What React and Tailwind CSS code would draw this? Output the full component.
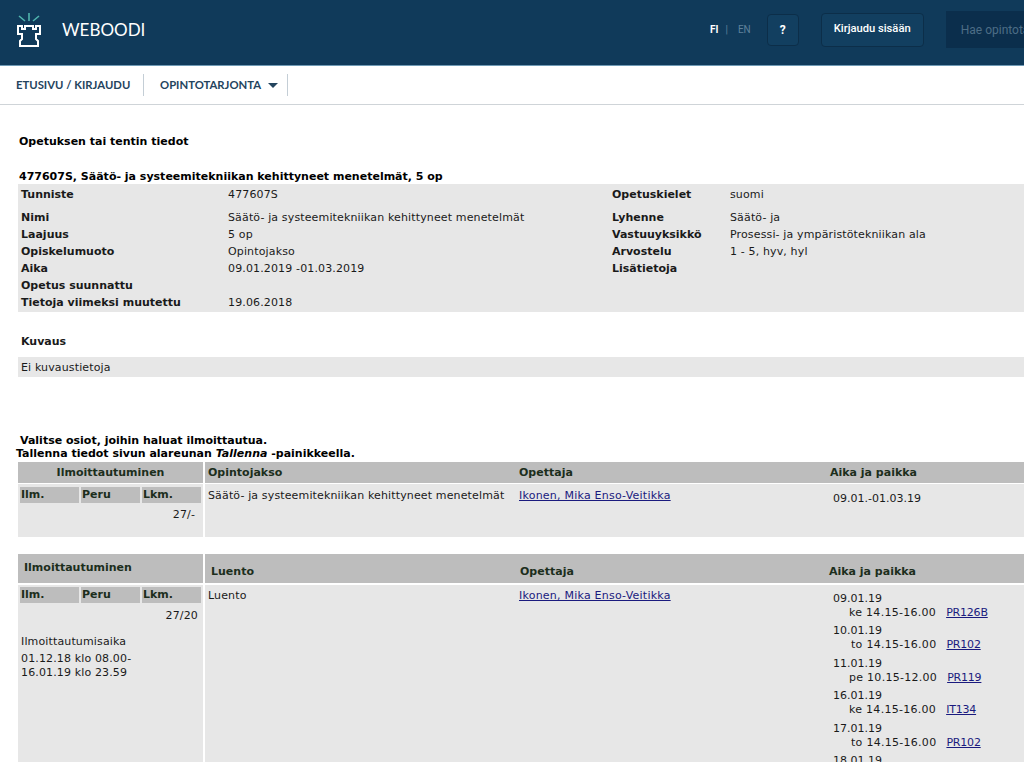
const info = [
  ["Nimi", "Säätö- ja systeemitekniikan kehittyneet menetelmät", "Lyhenne", "Säätö- ja"],
  ["Laajuus", "5 op", "Vastuuyksikkö", "Prosessi- ja ympäristötekniikan ala"],
  ["Opiskelumuoto", "Opintojakso", "Arvostelu", "1 - 5, hyv, hyl"],
  ["Aika", "09.01.2019 -01.03.2019", "Lisätietoja", ""],
  ["Opetus suunnattu", "", "", ""],
  ["Tietoja viimeksi muutettu", "19.06.2018", "", ""],
];

const times = [
  ["09.01.19", "ke 14.15-16.00", "PR126B", "pl-[16px]", "ml-[10px]"],
  ["10.01.19", "to 14.15-16.00", "PR102", "pl-[18px]", "ml-[10px]"],
  ["11.01.19", "pe 10.15-12.00", "PR119", "pl-[16px]", "ml-[10px]"],
  ["16.01.19", "ke 14.15-16.00", "IT134", "pl-[16px]", "ml-[10px]"],
  ["17.01.19", "to 14.15-16.00", "PR102", "pl-[18px]", "ml-[10px]"],
];

function SubHeads() {
  return (
    <div className="grid grid-cols-[59px_59px_59px] gap-x-[2px] font-bold tracking-normal text-[#1c2e1c] leading-[16px]">
      <div className="bg-[#bdbdbd] pl-[1px]">Ilm.</div>
      <div className="bg-[#bdbdbd] pl-[1px]">Peru</div>
      <div className="bg-[#bdbdbd] pl-[1px]">Lkm.</div>
    </div>
  );
}

function Logo() {
  return (
    <svg width="24" height="34" viewBox="0 0 24 34" fill="none">
      <path d="M2 3l6 5M12 0v8M22 3l-6 5" stroke="#4fb3ad" strokeWidth="1.6" />
      <path
        d="M1 13h4v3h3v-3h8v3h3v-3h4v8h-4v5l2 2v5H3v-5l2-2v-5H1z"
        stroke="#ffffff"
        strokeWidth="2"
      />
    </svg>
  );
}

export default function App() {
  return (
    <div className="w-[1024px] h-[762px] overflow-hidden bg-white text-[11px] tracking-[0.14px] text-[#1a1a1a] font-['DejaVu_Sans',sans-serif]">
      {/* header */}
      <div className="h-[66px] bg-[#103a5a] border-b border-[#6f9ab5] flex items-center pb-[6px] tracking-normal">
        <div className="ml-[17px]">
          <Logo />
        </div>
        <div className="ml-[21px] text-[17px] text-white font-['Lato',sans-serif]">WEBOODI</div>
        <div className="ml-auto flex items-center font-['Roboto',sans-serif] shrink-0 w-[314px]">
          <span className="text-white font-bold text-[10px]">FI</span>
          <span className="text-[#5f819a] ml-[7px] mr-[10px] text-[10px]">|</span>
          <span className="text-[#5f819a] text-[10px]">EN</span>
          <div className="ml-[16px] shrink-0 w-[32px] h-[32px] rounded-[4px] border border-[#0c2e49] bg-[#123f60] flex items-center justify-center text-white font-bold text-[12px]">
            ?
          </div>
          <div className="ml-[22px] shrink-0 w-[103px] h-[34px] rounded-[4px] border border-[#0c2e49] bg-[#123f60] flex items-center justify-center text-white text-[11.2px] font-medium">
            Kirjaudu sisään
          </div>
          <div className="ml-[22px] shrink-0 w-[78px] h-[37px] bg-[#0b2e4c] flex items-center pl-[15px] text-[#4d6d86] text-[12px] whitespace-nowrap overflow-hidden">
            Hae opintotarjonnasta
          </div>
        </div>
      </div>

      {/* nav */}
      <div className="h-[39px] border-b border-[#cfd4d8] flex items-center font-['Lato',sans-serif] text-[11.3px] font-bold tracking-normal text-[#24445e]">
        <div className="h-[22px] w-[144px] flex items-center pl-[16px] border-r border-[#c4ced6]">ETUSIVU / KIRJAUDU</div>
        <div className="h-[22px] w-[144px] flex items-center pl-[16px] border-r border-[#c4ced6]">
          OPINTOTARJONTA
          <span className="ml-[7px] w-0 h-0 border-x-[5px] border-x-transparent border-t-[5px] border-t-[#24445e]"></span>
        </div>
      </div>

      {/* content */}
      <div className="pl-[18px]">
        <div className="pt-[29px] pl-[1px] font-bold tracking-normal leading-[15px] text-black">Opetuksen tai tentin tiedot</div>
        <div className="pt-[20px] pl-[1px] font-bold tracking-normal leading-[15px] text-black">
          477607S, Säätö- ja systeemitekniikan kehittyneet menetelmät, 5 op
        </div>

        <div className="bg-[#e7e7e7] pb-[1px]">
          <div className="grid grid-cols-[207px_384px_118px_1fr] h-[25px] pl-[3px] pt-[3px] leading-[15px]">
            <div className="font-bold tracking-normal">Tunniste</div>
            <div>477607S</div>
            <div className="font-bold tracking-normal">Opetuskielet</div>
            <div>suomi</div>
          </div>
          {info.map((row) => (
            <div key={row[0]} className="grid grid-cols-[207px_384px_118px_1fr] h-[17px] pl-[3px] leading-[17px]">
              <div className="font-bold tracking-normal whitespace-nowrap">{row[0]}</div>
              <div className="whitespace-nowrap">{row[1]}</div>
              <div className="font-bold tracking-normal">{row[2]}</div>
              <div className="whitespace-nowrap">{row[3]}</div>
            </div>
          ))}
        </div>

        <div className="pt-[22px] pl-[3px] font-bold tracking-normal leading-[15px]">Kuvaus</div>
        <div className="mt-[8px] h-[20px] bg-[#e7e7e7] pl-[3px] leading-[21px]">Ei kuvaustietoja</div>

        <div className="mt-[57px] pl-[2px] font-bold tracking-normal leading-[13px] text-black">Valitse osiot, joihin haluat ilmoittautua.</div>
        <div className="ml-[-2px] font-bold tracking-normal leading-[13px] text-black">
          Tallenna tiedot sivun alareunan <i>Tallenna</i> -painikkeella.
        </div>

        {/* opintojakso table */}
        <div className="mt-[2px] grid grid-cols-[185px_1fr] gap-x-[2px] gap-y-[1px]">
          <div className="h-[21px] bg-[#bdbdbd] text-center font-bold tracking-normal leading-[21px] text-[#1c2e1c]">Ilmoittautuminen</div>
          <div className="h-[21px] bg-[#bdbdbd] grid grid-cols-[311px_311px_1fr] pl-[3px] font-bold tracking-normal leading-[21px] text-[#1c2e1c]">
            <div>Opintojakso</div>
            <div>Opettaja</div>
            <div>Aika ja paikka</div>
          </div>
          <div className="h-[53px] bg-[#e7e7e7] pt-[3px] pl-[2px]">
            <SubHeads />
            <div className="text-right pr-[8px] mt-[4px] leading-[15px]">27/-</div>
          </div>
          <div className="h-[53px] bg-[#e7e7e7] grid grid-cols-[311px_314px_1fr] pl-[3px] pt-[4px] leading-[15px]">
            <div className="whitespace-nowrap">Säätö- ja systeemitekniikan kehittyneet menetelmät</div>
            <div><a href="#" className="text-[#1a1a7e] underline tracking-[0.23px]">Ikonen, Mika Enso-Veitikka</a></div>
            <div className="pt-[3px] tracking-normal">09.01.-01.03.19</div>
          </div>
        </div>

        {/* luento table */}
        <div className="mt-[17px] grid grid-cols-[185px_1fr] gap-x-[2px] gap-y-[2px]">
          <div className="h-[29px] bg-[#bdbdbd] pl-[6px] font-bold tracking-normal leading-[28px] text-[#1c2e1c]">Ilmoittautuminen</div>
          <div className="h-[29px] bg-[#bdbdbd] grid grid-cols-[309px_309px_1fr] pl-[6px] pt-[10px] font-bold tracking-normal leading-[15px] text-[#1c2e1c]">
            <div>Luento</div>
            <div>Opettaja</div>
            <div>Aika ja paikka</div>
          </div>
          <div className="h-[200px] bg-[#e7e7e7] pt-[2px] pl-[2px]">
            <SubHeads />
            <div className="text-right pr-[5px] mt-[5px] leading-[15px]">27/20</div>
            <div className="mt-[11px] pl-[1px] leading-[15px]">Ilmoittautumisaika</div>
            <div className="mt-[3px] pl-[1px] leading-[14px]">
              01.12.18 klo 08.00-
              <br />
              16.01.19 klo 23.59
            </div>
          </div>
          <div className="h-[200px] bg-[#e7e7e7] grid grid-cols-[311px_314px_1fr] pl-[3px] pt-[3px] leading-[15px]">
            <div>Luento</div>
            <div><a href="#" className="text-[#1a1a7e] underline tracking-[0.23px]">Ikonen, Mika Enso-Veitikka</a></div>
            <div className="pt-[3px]">
              {times.map((t) => (
                <div key={t[0]} className="mb-[3.4px]">
                  <div className="leading-[15px] tracking-normal">{t[0]}</div>
                  <div className={`leading-[14px] whitespace-nowrap tracking-[0.28px] ${t[3]}`}>
                    {t[1]}
                    <a href="#" className={`text-[#1a1a7e] underline tracking-[-0.2px] ${t[4]}`}>{t[2]}</a>
                  </div>
                </div>
              ))}
              <div className="leading-[15px] tracking-normal">18.01.19</div>
            </div>
          </div>
        </div>
      </div>
    </div>
  );
}
